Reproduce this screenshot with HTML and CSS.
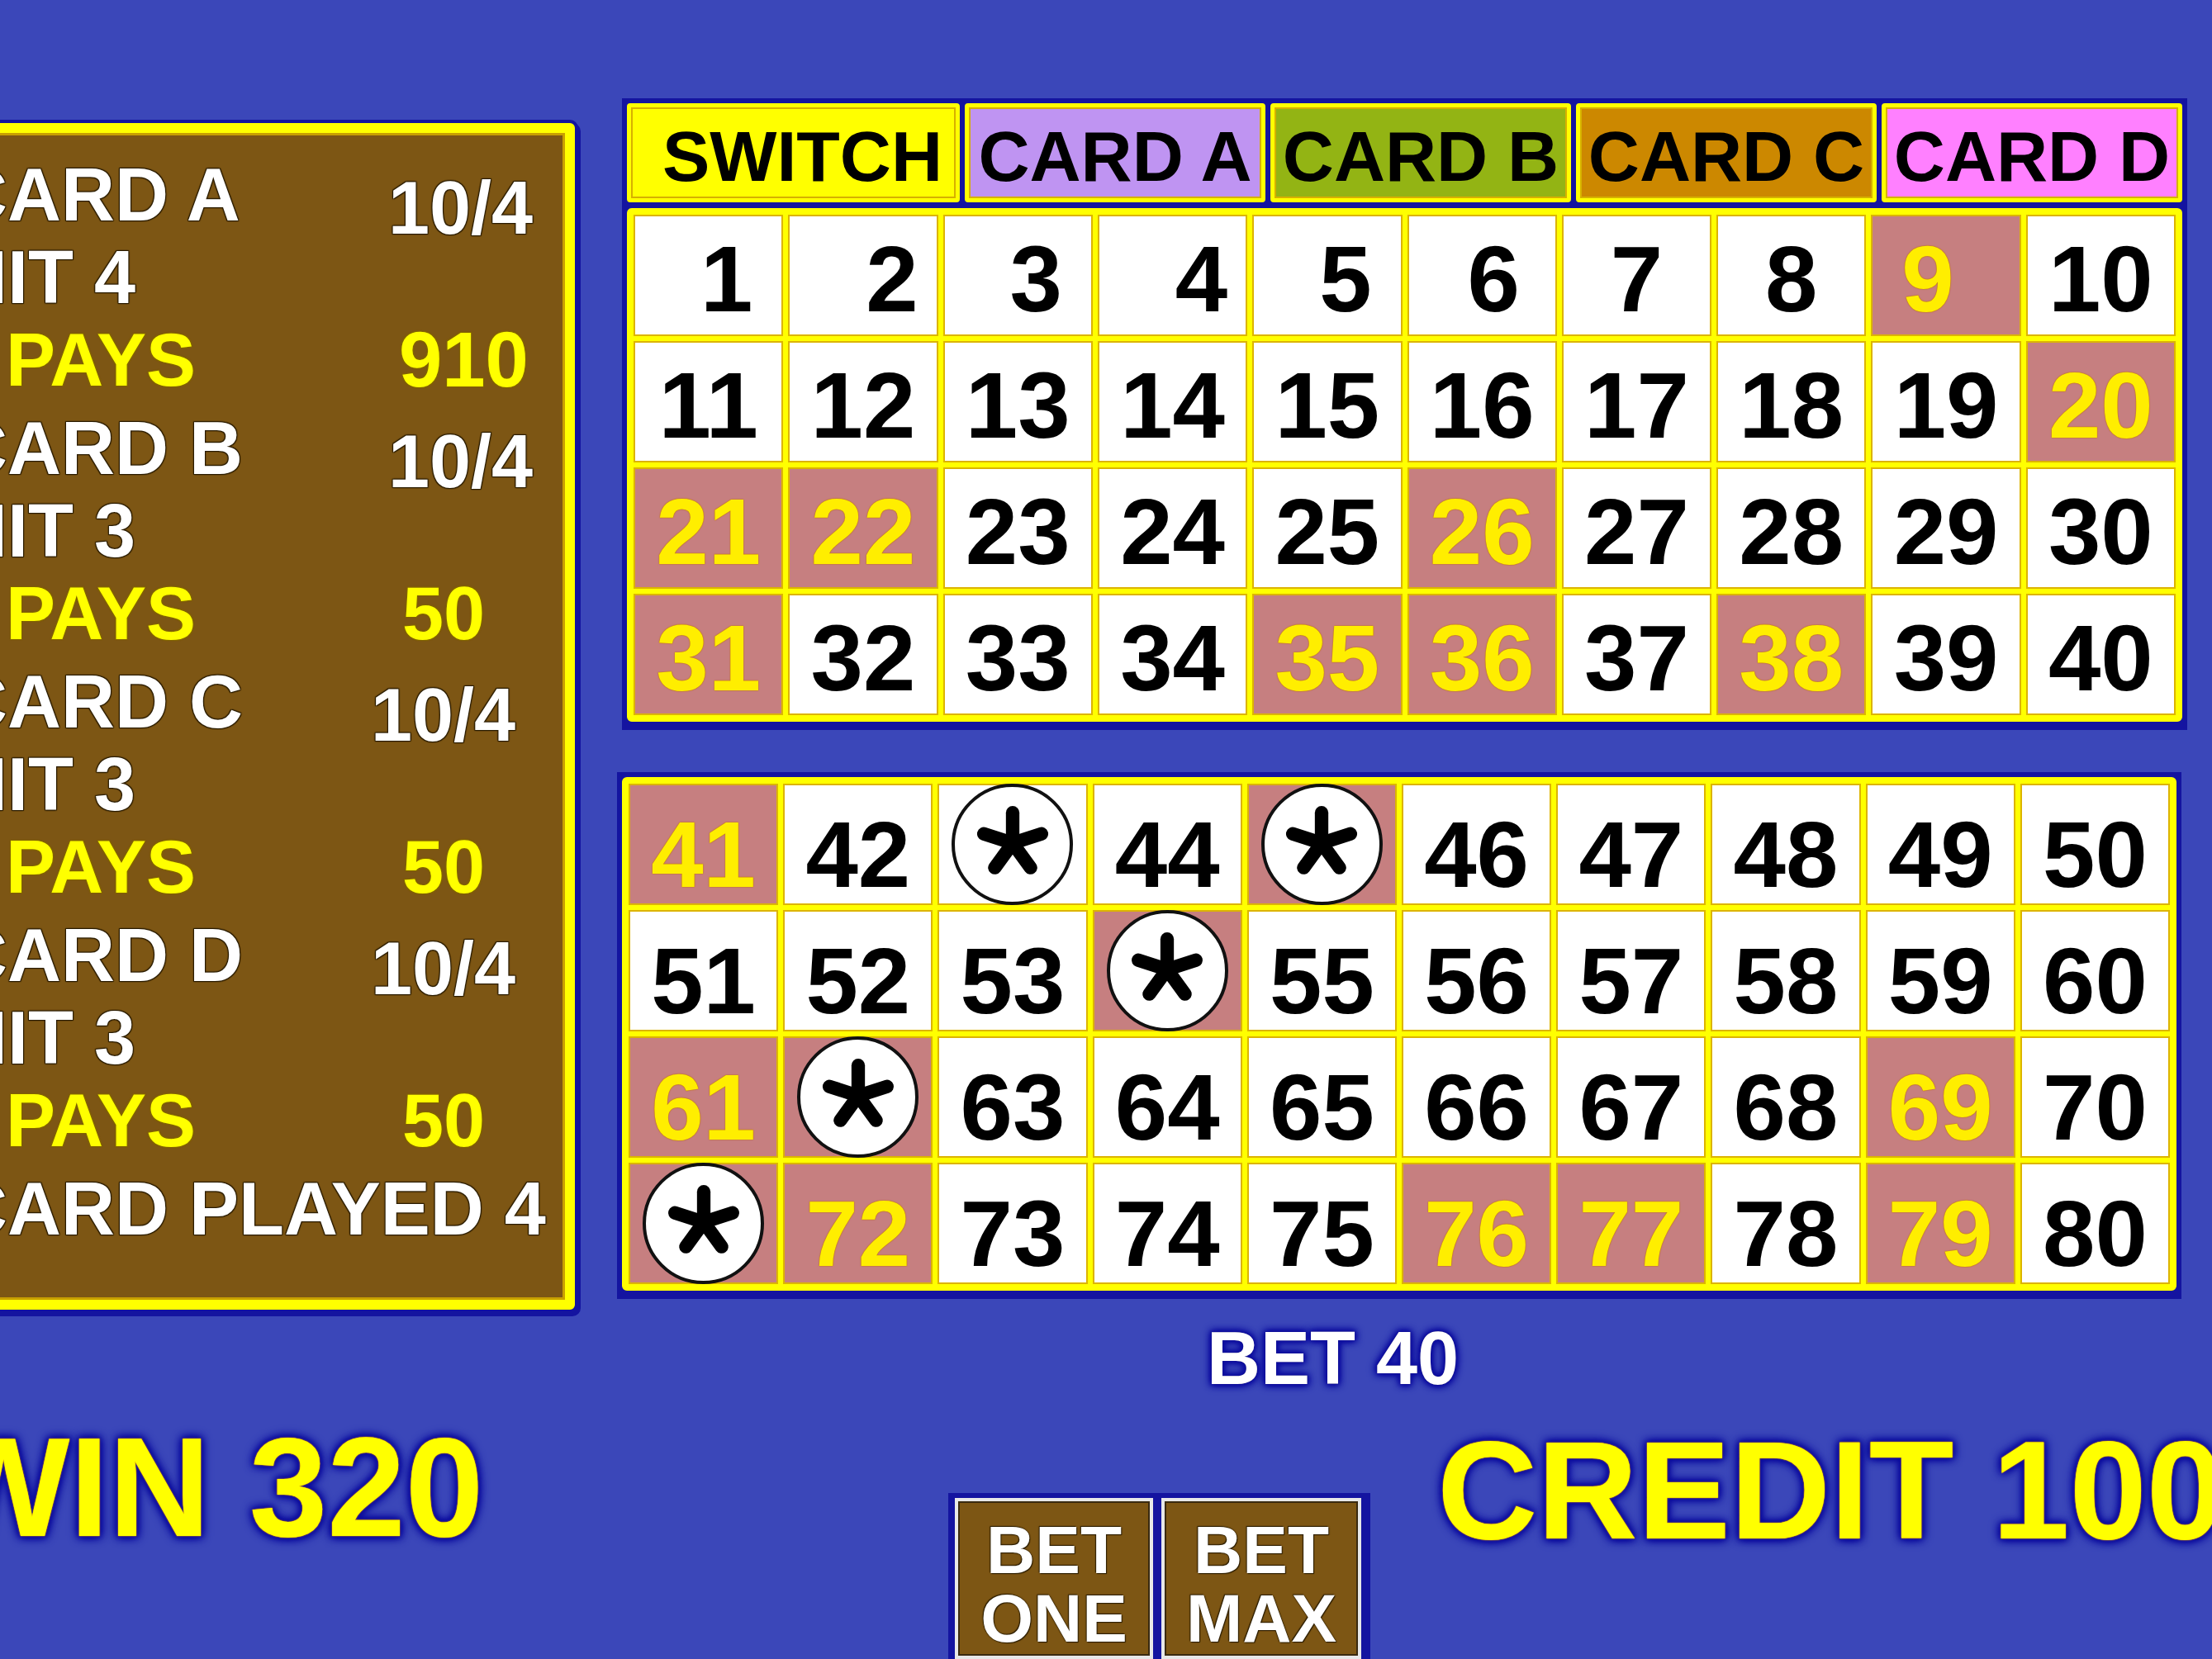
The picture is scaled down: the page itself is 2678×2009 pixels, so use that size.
FILE: index.html
```html
<!DOCTYPE html>
<html>
<head>
<meta charset="utf-8">
<title>Keno</title>
<link rel="stylesheet" href="styles.css">
</head>
<body>
<svg class="defs" width="0" height="0" aria-hidden="true">
  <symbol id="ast" viewBox="-50 -50 100 100">
    <g stroke="#000" stroke-width="16" stroke-linecap="round">
      <line x1="0" y1="0" x2="0" y2="-36"/>
      <line x1="0" y1="0" x2="34.2" y2="-11.1"/>
      <line x1="0" y1="0" x2="-34.2" y2="-11.1"/>
      <line x1="0" y1="0" x2="21.2" y2="29.1"/>
      <line x1="0" y1="0" x2="-21.2" y2="29.1"/>
    </g>
  </symbol>
</svg>
<div class="screen">
  <div class="top">
    <aside class="paytable">
      <div class="group">
        <div class="row"><span class="lbl">CARD A</span><span class="val low va">10/4</span></div>
        <div class="row"><span class="lbl">HIT 4</span></div>
        <div class="row yel"><span class="lbl ind">PAYS</span><span class="val vp">910</span></div>
      </div>
      <div class="group">
        <div class="row"><span class="lbl">CARD B</span><span class="val low vb">10/4</span></div>
        <div class="row"><span class="lbl">HIT 3</span></div>
        <div class="row yel"><span class="lbl ind">PAYS</span><span class="val vq">50</span></div>
      </div>
      <div class="group">
        <div class="row"><span class="lbl">CARD C</span><span class="val low">10/4</span></div>
        <div class="row"><span class="lbl">HIT 3</span></div>
        <div class="row yel"><span class="lbl ind">PAYS</span><span class="val vq">50</span></div>
      </div>
      <div class="group">
        <div class="row"><span class="lbl">CARD D</span><span class="val low">10/4</span></div>
        <div class="row"><span class="lbl">HIT 3</span></div>
        <div class="row yel"><span class="lbl ind">PAYS</span><span class="val vq">50</span></div>
      </div>
      <div class="row"><span class="lbl">CARD PLAYED 4</span></div>
    </aside>

    <div class="board">
      <div class="frame">
        <div class="tabs">
          <div class="tab sw">SWITCH</div>
          <div class="tab ca">CARD A</div>
          <div class="tab cb">CARD B</div>
          <div class="tab cc">CARD C</div>
          <div class="tab cd">CARD D</div>
        </div>
        <div class="grid g1">
          <div class="c sh2">1</div>
          <div class="c sh3">2</div>
          <div class="c sh2">3</div>
          <div class="c sh3">4</div>
          <div class="c sh2">5</div>
          <div class="c sh1">6</div>
          <div class="c">7</div>
          <div class="c">8</div>
          <div class="c hit shl">9</div>
          <div class="c">10</div>
          <div class="c">11</div>
          <div class="c">12</div>
          <div class="c">13</div>
          <div class="c">14</div>
          <div class="c">15</div>
          <div class="c">16</div>
          <div class="c">17</div>
          <div class="c">18</div>
          <div class="c">19</div>
          <div class="c hit">20</div>
          <div class="c hit">21</div>
          <div class="c hit">22</div>
          <div class="c">23</div>
          <div class="c">24</div>
          <div class="c">25</div>
          <div class="c hit">26</div>
          <div class="c">27</div>
          <div class="c">28</div>
          <div class="c">29</div>
          <div class="c">30</div>
          <div class="c hit">31</div>
          <div class="c">32</div>
          <div class="c">33</div>
          <div class="c">34</div>
          <div class="c hit">35</div>
          <div class="c hit">36</div>
          <div class="c">37</div>
          <div class="c hit">38</div>
          <div class="c">39</div>
          <div class="c">40</div>
        </div>
      </div>

      <div class="frame frame2">
        <div class="grid g2">
          <div class="c hit">41</div>
          <div class="c">42</div>
          <div class="c st"><div class="star"><svg><use href="#ast"/></svg></div></div>
          <div class="c">44</div>
          <div class="c hit st"><div class="star"><svg><use href="#ast"/></svg></div></div>
          <div class="c">46</div>
          <div class="c">47</div>
          <div class="c">48</div>
          <div class="c">49</div>
          <div class="c">50</div>
          <div class="c">51</div>
          <div class="c">52</div>
          <div class="c">53</div>
          <div class="c hit st"><div class="star"><svg><use href="#ast"/></svg></div></div>
          <div class="c">55</div>
          <div class="c">56</div>
          <div class="c">57</div>
          <div class="c">58</div>
          <div class="c">59</div>
          <div class="c">60</div>
          <div class="c hit">61</div>
          <div class="c hit st"><div class="star"><svg><use href="#ast"/></svg></div></div>
          <div class="c">63</div>
          <div class="c">64</div>
          <div class="c">65</div>
          <div class="c">66</div>
          <div class="c">67</div>
          <div class="c">68</div>
          <div class="c hit">69</div>
          <div class="c">70</div>
          <div class="c hit st"><div class="star"><svg><use href="#ast"/></svg></div></div>
          <div class="c hit">72</div>
          <div class="c">73</div>
          <div class="c">74</div>
          <div class="c">75</div>
          <div class="c hit">76</div>
          <div class="c hit">77</div>
          <div class="c">78</div>
          <div class="c hit">79</div>
          <div class="c">80</div>
        </div>
      </div>

      <div class="bet">BET 40</div>
    </div>
  </div>

  <div class="bottom">
    <div class="win">WIN 320</div>
    <div class="buttons">
      <div class="btn">BET<br>ONE</div>
      <div class="btn max">BET<br>MAX</div>
    </div>
    <div class="credit">CREDIT 100</div>
  </div>
</div>
</body>
</html>
```

FILE: styles.css
```css
html, body {
  margin: 0;
  padding: 0;
  height: 2009px;
  overflow: hidden;
  background: #3b47b9;
}

body {
  font-family: "Liberation Sans", Arial, sans-serif;
  font-weight: 700;
}

.defs {
  position: absolute;
  width: 0;
  height: 0;
}

.screen {
  width: 2678px;
  height: 2009px;
  overflow: hidden;
}

/* ---------- top area ---------- */
.top {
  display: flex;
  align-items: flex-start;
  padding-top: 119px;
}

.paytable {
  flex: none;
  box-sizing: border-box;
  width: 796px;
  height: 1437px;
  margin-left: -100px;
  margin-top: 30px;
  padding: 25px 0 0 32px;
  background: #7d5614;
  border: 12px solid #ffff00;
  border-radius: 6px;
  box-shadow: inset 0 0 0 3px #c9a000, 3px 4px 0 4px #1414a0, 0 0 0 4px #1414a0;
}

.group {
  margin-bottom: 7px;
}

.row {
  display: flex;
  align-items: center;
  height: 100px;
  font-size: 90px;
  line-height: 100px;
  color: #ffffff;
  white-space: nowrap;
  text-shadow: 0 0 2px #2a1c00, 1px 1px 1px #2a1c00, -1px -1px 1px #2a1c00, 1px -1px 1px #2a1c00, -1px 1px 1px #2a1c00;
}

.row.yel {
  color: #ffff00;
  text-shadow: 0 0 2px #6a5000, 1px 1px 1px #8a6a00, -1px -1px 1px #8a6a00, 1px -1px 1px #8a6a00, -1px 1px 1px #8a6a00;
}

.lbl {
  flex: none;
  box-sizing: border-box;
  width: 505px;
}

.ind { padding-left: 63px; }

.low { padding-top: 32px; }
.va { padding-left: 21px; }
.vb { padding-left: 21px; }
.vp { padding-left: 34px; font-size: 94px; }
.vq { padding-left: 38px; }

/* ---------- board ---------- */
.board {
  flex: none;
  width: 1895px;
  margin-left: 57px;
}

.frame {
  display: flex;
  flex-direction: column;
  gap: 7px;
  padding: 6px 6px 10px;
  background: #1414a0;
}

.frame2 {
  box-sizing: border-box;
  width: 1894px;
  margin-top: 51px;
  margin-left: -6px;
}

.tabs {
  display: flex;
  gap: 6px;
  height: 120px;
}

.tab {
  flex: none;
  box-sizing: border-box;
  width: 364px;
  height: 120px;
  padding-top: 8px;
  border: 5px solid #ffff00;
  border-radius: 4px;
  box-shadow: inset 0 0 0 2px #d6b000;
  display: flex;
  align-items: center;
  justify-content: center;
  font-size: 86px;
  color: #000;
  white-space: nowrap;
}

.tab.sw { width: 403px; padding-left: 22px; background: #ffff00; }
.tab.ca { background: #bf94f2; }
.tab.cb { background: #93b414; }
.tab.cc { background: #cc8800; }
.tab.cd { background: #ff80ff; }

.grid {
  box-sizing: border-box;
  display: grid;
  grid-template-columns: repeat(10, 1fr);
  grid-auto-rows: 143px;
  gap: 10px;
  border: 10px solid #ffff00;
  border-radius: 6px;
  background: #ffff00;
}

.c {
  display: flex;
  align-items: center;
  justify-content: center;
  background: #ffffff;
  box-shadow: 0 0 0 2px #dcb400;
  font-size: 114px;
  line-height: 1;
  color: #000;
}

.g1 .c { padding-top: 8px; }
.g2 .c { padding-top: 24px; }

.c.sh1 { padding-left: 28px; }
.c.sh2 { padding-left: 44px; }
.c.sh3 { padding-left: 70px; }
.c.shl { padding-right: 44px; }

.c.hit {
  background: #c67f80;
  color: #ffee00;
  text-shadow: 0 0 2px #c07000, 0 0 1px #c07000;
}

.g2 .c.st { padding: 0; }

.star {
  flex: none;
  box-sizing: border-box;
  width: 147px;
  height: 147px;
  border-radius: 50%;
  background: #ffffff;
  border: 4px solid #111;
  display: flex;
  align-items: center;
  justify-content: center;
}

.star svg {
  width: 102px;
  height: 102px;
  margin-top: -4px;
}

.bet {
  margin-top: 27px;
  padding-left: 708px;
  font-size: 90px;
  line-height: 90px;
  color: #ffffff;
  white-space: nowrap;
  text-shadow: 0 0 1px #202060, 0 0 4px #0e0ea0, 0 0 6px #0e0ea0, 0 0 8px #0e0ea0, 0 0 10px #0e0ea0, 0 0 12px #0e0ea0;
}

/* ---------- bottom area ---------- */
.bottom {
  display: grid;
  grid-template-columns: 1224px 592px 1fr;
  align-items: start;
  margin-left: -76px;
  margin-top: 26px;
}

.win,
.credit {
  font-size: 170px;
  line-height: 170px;
  color: #ffff00;
  white-space: nowrap;
  text-shadow: 0 0 1px #e09000, 0 0 2px #e09000, 0 0 5px #0c0c9e, 0 0 8px #0c0c9e, 0 0 10px #0c0c9e, 0 0 12px #0c0c9e, 0 0 14px #0c0c9e;
}

.credit {
  font-size: 168px;
  line-height: 168px;
  margin-top: 5px;
}

.buttons {
  display: flex;
  gap: 10px;
  width: max-content;
  margin-top: 92px;
  padding: 6px 11px 0 8px;
  background: #1414a0;
}

.btn {
  box-sizing: border-box;
  width: 240px;
  height: 195px;
  padding-top: 17px;
  background: #7d5614;
  border: 4px solid #e8e8e8;
  box-shadow: inset 0 0 0 2px #3a2a10;
  color: #ffffff;
  font-size: 82px;
  line-height: 83px;
  text-align: center;
  text-shadow: 0 0 2px #2a1c00, 1px 1px 1px #2a1c00, -1px -1px 1px #2a1c00;
}

.btn.max { width: 242px; }
```
